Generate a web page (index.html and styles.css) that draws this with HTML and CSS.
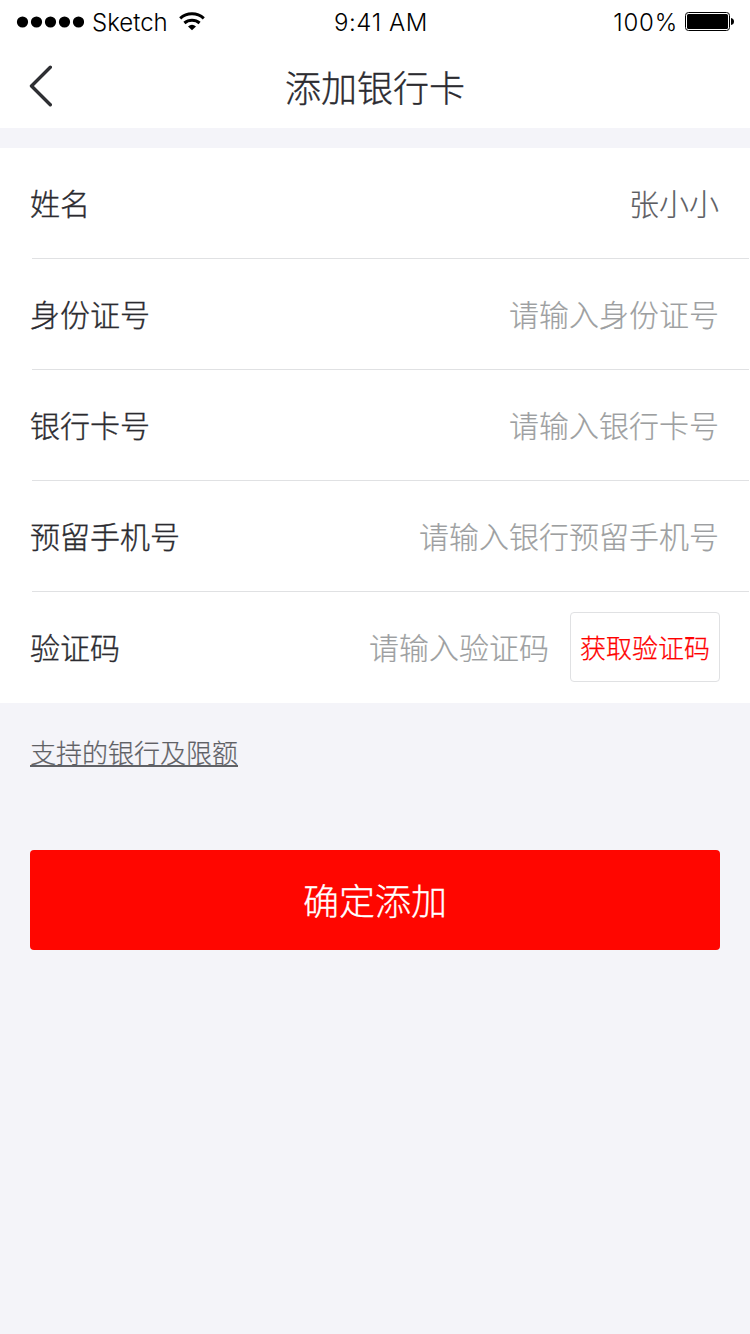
FILE: index.html
```html
<!DOCTYPE html>
<html lang="zh-CN">
<head>
<meta charset="utf-8">
<title>添加银行卡</title>
<link rel="stylesheet" href="styles.css">
</head>
<body>
<header class="header">
  <div class="status">
    <div class="status-left">
      <svg class="dots" width="68" height="12" viewBox="0 0 68 12"><circle cx="6.500" cy="6" r="5.600"/><circle cx="20.500" cy="6" r="5.600"/><circle cx="34.500" cy="6" r="5.600"/><circle cx="48.500" cy="6" r="5.600"/><circle cx="62.500" cy="6" r="5.600"/></svg>
      <span class="carrier">Sketch</span>
      <svg class="wifi" width="26" height="19" viewBox="0 0 26 19"><g fill="none" stroke="#000" stroke-width="3"><path d="M1.200 6.400A17.500 17.500 0 0 1 24.800 6.400"/><path d="M5.400 11A11.500 11.500 0 0 1 20.600 11"/></g><path d="M9 14.400A6.200 6.200 0 0 1 17 14.400L13 18.300Z"/></svg>
    </div>
    <span class="time">9:41 AM</span>
    <div class="status-right">
      <span class="percent">100%</span>
      <svg class="battery" width="49" height="19" viewBox="0 0 49 19"><rect x=".5" y=".5" width="44" height="18" rx="3" fill="none" stroke="#000"/><rect x="2" y="2" width="41" height="15" rx="1.500"/><path d="M46 6q3 .5 3 3.500t-3 3.500z"/></svg>
    </div>
  </div>
  <nav class="nav">
    <svg class="back" width="24" height="42" viewBox="0 0 24 42"><path d="M22.300 2.300 3.500 21 22.300 39.700" fill="none" stroke="#2e2f33" stroke-width="3.400" stroke-linecap="round" stroke-linejoin="round"/></svg>
    <h1 class="title">添加银行卡</h1>
    <span class="nav-space"></span>
  </nav>
</header>
<main>
  <form class="form">
    <div class="row"><span class="label">姓名</span><span class="value">张小小</span></div>
    <div class="row"><span class="label">身份证号</span><span class="hint">请输入身份证号</span></div>
    <div class="row"><span class="label">银行卡号</span><span class="hint">请输入银行卡号</span></div>
    <div class="row"><span class="label">预留手机号</span><span class="hint">请输入银行预留手机号</span></div>
    <div class="row"><span class="label">验证码</span><span class="hint">请输入验证码</span><button class="code" type="button">获取验证码</button></div>
  </form>
  <a class="limits">支持的银行及限额</a>
  <button class="submit" type="button">确定添加</button>
</main>
</body>
</html>
```
FILE: styles.css
```css
* { box-sizing: border-box; }
body { margin: 0; min-height: 1334px; background: #f4f4f9; font-family: "Noto Sans CJK SC", sans-serif; font-weight: 300; color: #2b2b30; }
svg { display: block; flex: none; }
button { font-family: inherit; font-weight: 300; padding: 0; }
.header { height: 128px; background: #fff; }
.status { height: 43px; display: grid; grid-template-columns: 1fr auto 1fr; align-items: center; padding: 0 16px; font-family: Inter, "Liberation Sans", sans-serif; font-size: 24px; line-height: 40px; color: #000; }
.status-left, .status-right { display: flex; align-items: center; height: 43px; }
.status-right { justify-content: flex-end; }
.carrier { width: 74px; margin-left: 8px; padding-top: 2px; }
.wifi { margin-left: 13px; }
.time { padding: 2px 0 0 12px; letter-spacing: .6px; }
.percent { padding-top: 2px; letter-spacing: .8px; }
.battery { margin-left: 7px; }
.nav { height: 85px; display: flex; align-items: center; justify-content: space-between; padding: 0 28px; }
.nav-space { width: 24px; }
.title { margin: 0; font-size: 36px; font-weight: 300; line-height: 84px; -webkit-text-stroke: .35px currentColor; }
.form { margin: 20px 0 0; height: 555px; background: #fff; padding: 0 1px 0 30px; }
.row { height: 111px; display: flex; align-items: center; padding: 0 29px 2px 0; font-size: 30px; background: linear-gradient(#e0e1e3, #e0e1e3) 2px 100% / 100% 1px no-repeat; }
.row:last-child { background: none; }
.label { margin-right: auto; padding-bottom: 2px; -webkit-text-stroke: .35px currentColor; }
.value { color: #5c5d63; -webkit-text-stroke: .2px currentColor; }
.hint { color: #9d9fa1; -webkit-text-stroke: .2px currentColor; }
.value, .hint { padding-bottom: 2px; margin-right: 1px; }
.code { width: 150px; height: 70px; margin-left: 20px; border: 1px solid #e0e1e3; border-radius: 4px; background: #fff; color: #f00; font-size: 26px; -webkit-text-stroke: .25px currentColor; }
.limits { display: block; width: max-content; margin: 29px 0 0 30px; font-size: 26px; line-height: 40px; color: #5f6166; text-decoration: underline 2px; text-underline-offset: 2px; -webkit-text-stroke: .2px currentColor; }
.submit { display: block; width: 690px; height: 100px; margin: 78px 30px 0; border: 0; border-radius: 4px; background: #ff0600; color: #fff; font-size: 36px; padding-bottom: 2px; -webkit-text-stroke: .3px currentColor; }
```
